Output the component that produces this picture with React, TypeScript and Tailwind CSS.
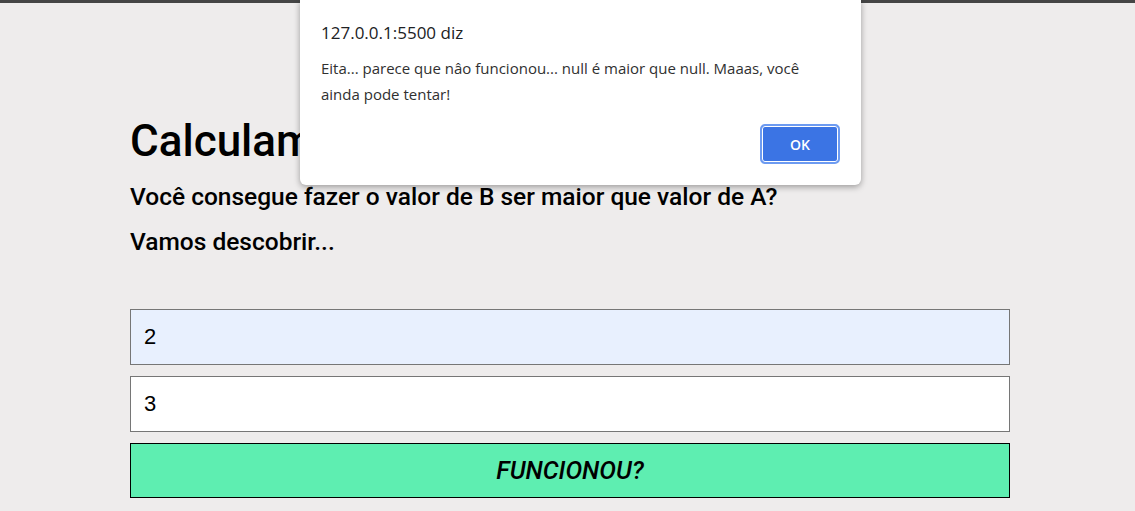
export default function App() {
  return (
    <div className="relative h-[511px] w-[1135px] overflow-hidden bg-[#eeecec] font-['Roboto',sans-serif] text-black">
      <div className="h-[3px] w-full bg-[#454545]" />

      <main className="ml-[130px] w-[880px] pt-[112px]">
        <h1 className="text-[44px] font-medium leading-[52px]">Calculamos</h1>
        <p className="mt-[15px] text-[24.5px] font-medium leading-[30px]">
          Você consegue fazer o valor de B ser maior que valor de A?
        </p>
        <p className="mt-[15px] text-[24.5px] font-medium leading-[30px]">Vamos descobrir...</p>

        <div className="mt-[52px] flex flex-col gap-[11px]">
          <input
            readOnly
            value="2"
            className="h-[56px] w-full border border-[#767676] bg-[#e8f0fe] px-[13px] font-['Liberation_Sans',sans-serif] text-[22px] outline-none"
          />
          <input
            readOnly
            value="3"
            className="h-[56px] w-full border border-[#767676] bg-white px-[13px] font-['Liberation_Sans',sans-serif] text-[22px] outline-none"
          />
          <button className="h-[55px] w-full border border-black bg-[#5eeeb1] text-[25px] font-medium italic">
            FUNCIONOU?
          </button>
        </div>
      </main>

      <div className="absolute left-[300px] top-0 h-[185px] w-[561px] rounded-b-[6px] bg-white pl-[21px] pr-[21px] font-['Open_Sans',sans-serif] shadow-[0_2px_6px_rgba(0,0,0,0.35)]">
        <p className="pt-[20px] text-[17px] leading-[26px] text-[#202124]">127.0.0.1:5500 diz</p>
        <p className="mt-[9px] pr-[10px] text-[15px] leading-[26px] text-[#303030]">
          Eita... parece que nâo funcionou... null é maior que null. Maaas, você ainda pode tentar!
        </p>
        <div className="mt-[17px] flex justify-end">
          <button className="h-[40px] w-[80px] rounded-[5px] border-2 border-[#6d9bf1] bg-[#3b74e4] text-[14px] font-semibold text-white ring-1 ring-inset ring-white">
            OK
          </button>
        </div>
      </div>
    </div>
  );
}
